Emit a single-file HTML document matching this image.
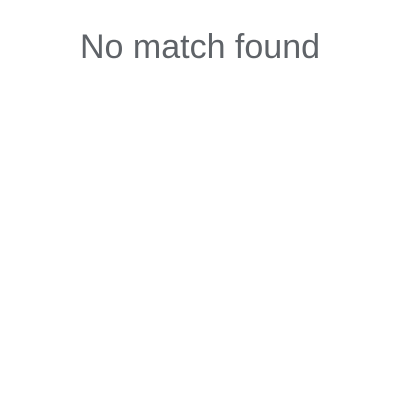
<!DOCTYPE html>
<html><head><style>
html,body{margin:0;padding:0;background:#fff;width:400px;height:400px;overflow:hidden}
.t{position:absolute;left:0;width:400px;top:27px;text-align:center;font-family:"Liberation Sans",sans-serif;font-size:34px;line-height:40px;color:#5f6368}
</style></head><body>
<div class="t">No match found</div>
</body></html>
